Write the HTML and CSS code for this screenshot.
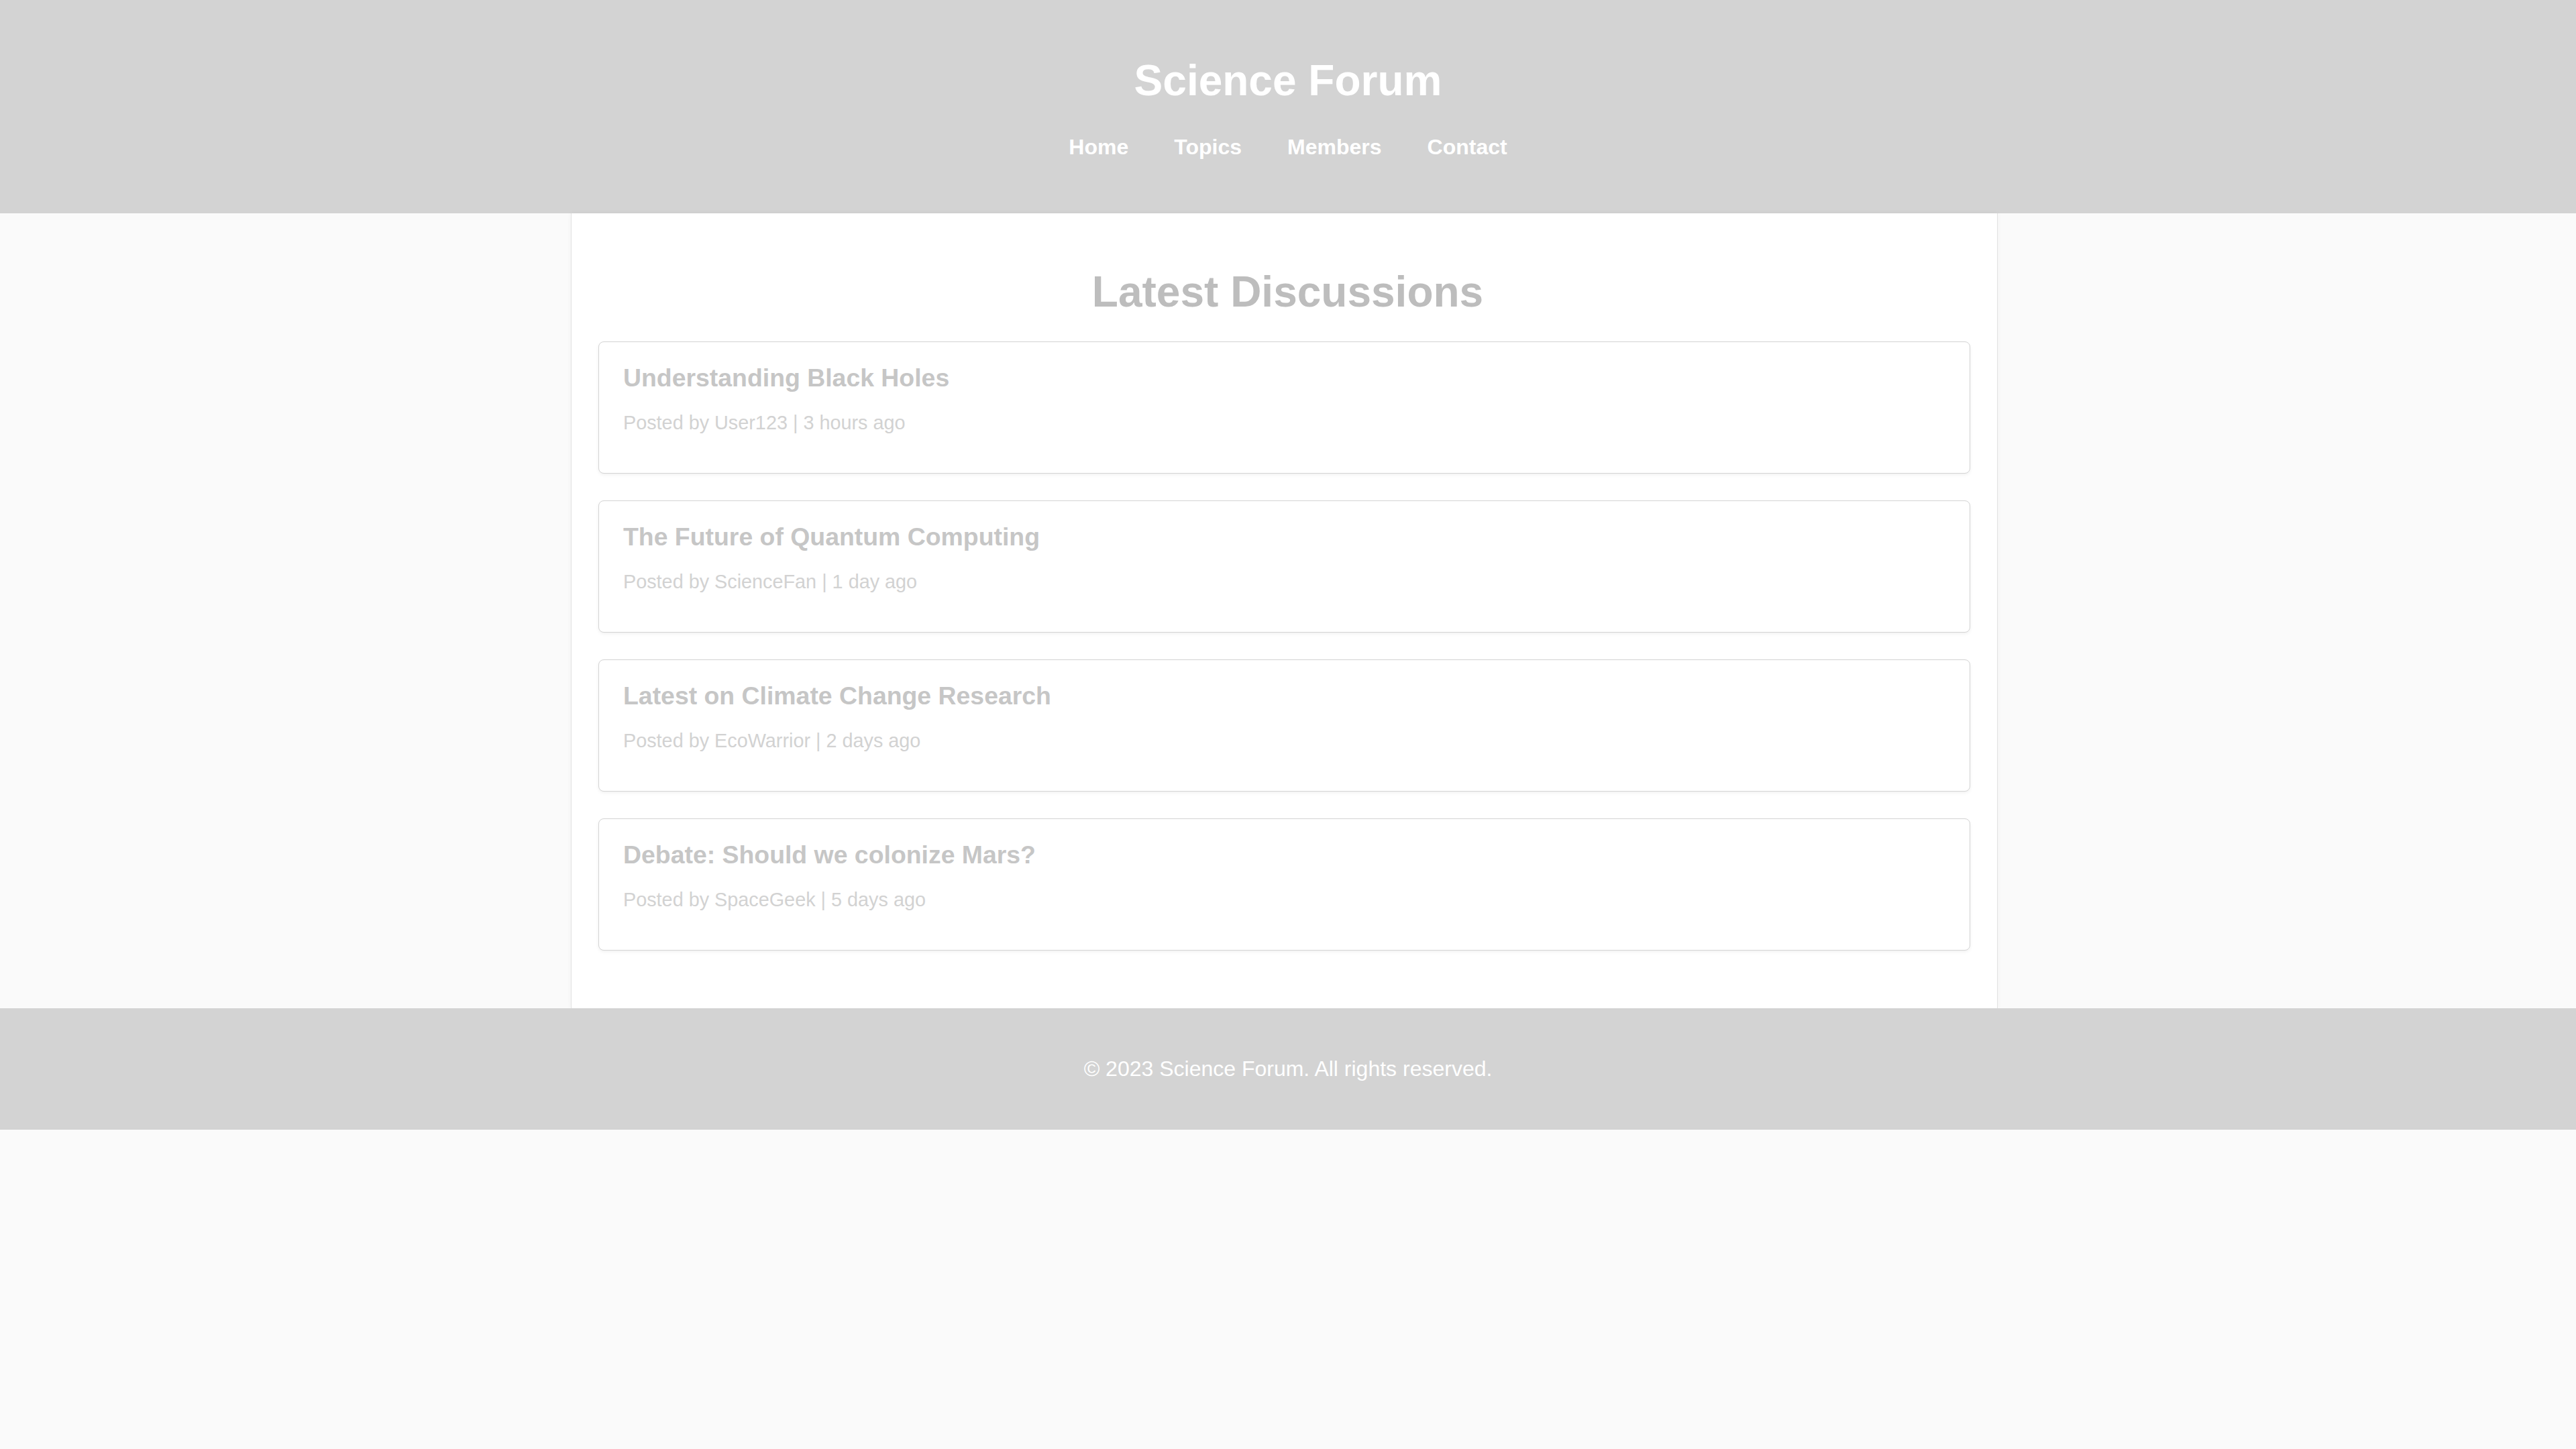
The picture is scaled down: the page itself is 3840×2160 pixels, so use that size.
FILE: index.html
```html
<!DOCTYPE html>
<html lang="en">
<head>
    <meta charset="UTF-8">
    <meta name="viewport" content="width=device-width, initial-scale=1.0">
    <title>Science Forum</title>
    <link rel="stylesheet" href="styles.css">
</head>
<body>

    <header class="site-header">
        <h1>Science Forum</h1>
        <nav class="main-nav">
            <a href="#">Home</a>
            <a href="#">Topics</a>
            <a href="#">Members</a>
            <a href="#">Contact</a>
        </nav>
    </header>

    <main class="container">
        <h2>Latest Discussions</h2>

        <div class="thread">
            <h3>Understanding Black Holes</h3>
            <p class="meta">Posted by User123 | 3 hours ago</p>
        </div>
        <div class="thread">
            <h3>The Future of Quantum Computing</h3>
            <p class="meta">Posted by ScienceFan | 1 day ago</p>
        </div>
        <div class="thread">
            <h3>Latest on Climate Change Research</h3>
            <p class="meta">Posted by EcoWarrior | 2 days ago</p>
        </div>
        <div class="thread">
            <h3>Debate: Should we colonize Mars?</h3>
            <p class="meta">Posted by SpaceGeek | 5 days ago</p>
        </div>
    </main>

    <footer class="site-footer">
        <p>&copy; 2023 Science Forum. All rights reserved.</p>
    </footer>

</body>
</html>
```

FILE: styles.css
```css
body {
    font-family: 'Liberation Sans', Arial, sans-serif;
    font-size: 32px;
    background: #fafafa;
    color: #c8c8c8;
    margin: 0;
    padding: 0;
}

.site-header {
    background: #d3d3d3;
    color: #fff;
    text-align: center;
    padding: 40px 0 42px;
}

.site-header h1 {
    font-size: 64px;
    margin: 43px 0 44px;
}

.main-nav {
    display: flex;
    justify-content: center;
    gap: 68px;
    padding-bottom: 38px;
}

.main-nav a {
    color: #fff;
    font-weight: bold;
    text-decoration: none;
}

.container {
    width: 2127px;
    margin: 0 0 0 calc(50% - 1069px);
    padding: 40px 40px 46px;
    box-sizing: border-box;
    background: #fff;
    border-left: 1px solid #e2e2e2;
    border-right: 1px solid #e2e2e2;
    box-shadow: 0 0 8px rgba(0, 0, 0, 0.04);
}

.container h2 {
    font-size: 64px;
    text-align: center;
    color: #bdbdbd;
    margin: 40px 0 37px;
    padding-left: 10px;
}

.thread {
    background: #fff;
    border: 1px solid #d4d4d4;
    border-radius: 8px;
    box-shadow: 0 2px 5px rgba(0, 0, 0, 0.06);
    padding: 32px 32px 32px 36px;
    margin-bottom: 40px;
}

.thread h3 {
    font-size: 37.4px;
    color: #c6c6c6;
    margin: 0;
}

.meta {
    font-size: 28.8px;
    color: #d2d2d2;
    margin: 29px 0 26px;
}

.site-footer {
    background: #d3d3d3;
    color: #fff;
    text-align: center;
    padding: 40px 0;
}

.site-footer p {
    margin: 32px 0;
}
```
